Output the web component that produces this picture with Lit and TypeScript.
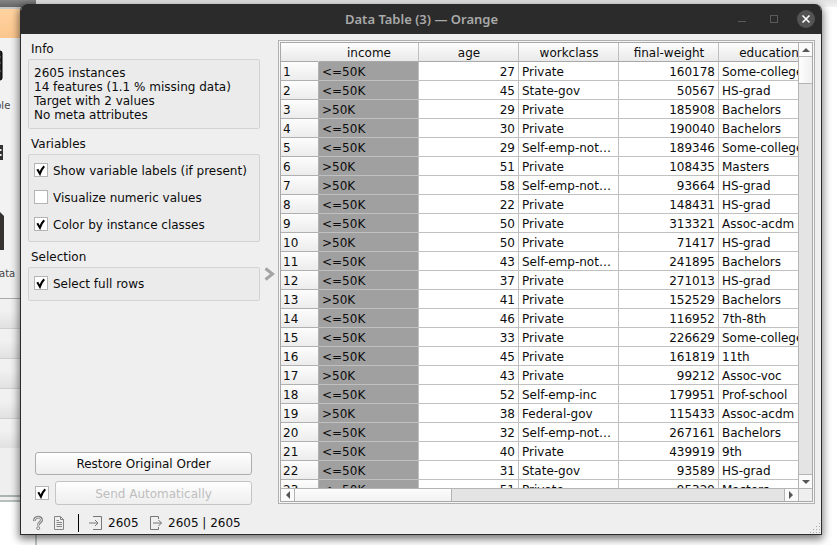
import { LitElement, html, css, svg } from "lit";
import { customElement } from "lit/decorators.js";

type Row = [string, string, string, string, string];

const LE = "<=50K";
const GT = ">50K";
const SELF = "Self-emp-not…";

const ROWS: Row[] = [
  [LE, "27", "Private", "160178", "Some-college"],
  [LE, "45", "State-gov", "50567", "HS-grad"],
  [GT, "29", "Private", "185908", "Bachelors"],
  [LE, "30", "Private", "190040", "Bachelors"],
  [LE, "29", SELF, "189346", "Some-college"],
  [GT, "51", "Private", "108435", "Masters"],
  [GT, "58", SELF, "93664", "HS-grad"],
  [LE, "22", "Private", "148431", "HS-grad"],
  [LE, "50", "Private", "313321", "Assoc-acdm"],
  [GT, "50", "Private", "71417", "HS-grad"],
  [LE, "43", SELF, "241895", "Bachelors"],
  [LE, "37", "Private", "271013", "HS-grad"],
  [GT, "41", "Private", "152529", "Bachelors"],
  [LE, "46", "Private", "116952", "7th-8th"],
  [LE, "33", "Private", "226629", "Some-college"],
  [LE, "45", "Private", "161819", "11th"],
  [GT, "43", "Private", "99212", "Assoc-voc"],
  [LE, "52", "Self-emp-inc", "179951", "Prof-school"],
  [GT, "38", "Federal-gov", "115433", "Assoc-acdm"],
  [LE, "32", SELF, "267161", "Bachelors"],
  [LE, "40", "Private", "439919", "9th"],
  [LE, "31", "State-gov", "93589", "HS-grad"],
  [LE, "51", "Private", "95329", "Masters"],
];

const COLUMNS = ["income", "age", "workclass", "final-weight", "education"];

/** Strip of the canvas window that shows behind the dialog. */
@customElement("canvas-backdrop")
export class CanvasBackdrop extends LitElement {
  static styles = css`
    :host { display: flex; flex-direction: column; width: 837px; height: 545px; overflow: hidden; background: #fff;
      font: 10px/12px "DejaVu Sans", sans-serif; color: #444; }
    .top { display: flex; height: 7px; background: linear-gradient(#e2e2e2, #f4f4f4); }
    .bar { width: 36px; background: linear-gradient(#858585, #666); }
    .edge { width: 36px; height: 2px; background: #c8c8c8; }
    .tab { width: 36px; height: 29px; background: linear-gradient(#ffd3a0, #fcc68d); }
    .tools { position: relative; width: 36px; height: 260px; background: #f2f2f2; }
    .tools svg { position: absolute; left: 0; top: 0; }
    .cap { position: absolute; left: 0; white-space: nowrap; }
    .ple { top: 62px; left: -5px; }
    .ata { top: 230px; left: -1px; }
    .band { width: 36px; height: 30px; box-sizing: border-box; border-top: 1px solid #cfcfcf; background: linear-gradient(#f1f1f1 40%, #e1e1e1); }
    .first { border-top-color: #aaa; }
    .rest { width: 36px; height: 47px; background: #efefef; border-bottom: 2px solid #acb4b1; }
    .gap { width: 36px; height: 3px; background: #f0f0f0; border-bottom: 2px solid #b7bfbc; }
    .foot { width: 35px; flex: 1; border-right: 2px solid #c0c8c5; background: #fff; }
  `;
  render() {
    return html`
      <div class="top"><div class="bar"></div></div>
      <div class="edge"></div>
      <div class="tab"></div>
      <div class="tools">
        <svg width="36" height="260">
          <path d="M-8 13H0Q2 13 2 15V40Q2 42 0 42H-8" fill="#222" stroke="#000"></path>
          <path d="M0 19H1M0 25H1M0 33H1" stroke="#777"></path>
          <path d="M0 107H3V122H0Z" fill="#333"></path>
          <path d="M0 111H1.500V113H0M0 116H1.500V118H0" fill="#eee"></path>
          <path d="M0 174L4 178V212H0Z" fill="#353331"></path>
        </svg>
        <span class="cap ple">ble</span>
        <span class="cap ata">ata</span>
      </div>
      <div class="band first"></div>
      <div class="band"></div><div class="band"></div><div class="band"></div><div class="band"></div>
      <div class="rest"></div>
      <div class="gap"></div>
      <div class="foot"></div>
    `;
  }
}

@customElement("check-box")
export class CheckBox extends LitElement {
  static properties = { checked: { type: Boolean } };
  declare checked: boolean;
  static styles = css`
    :host { display: flex; align-items: center; gap: 5px; height: 14px; white-space: nowrap; }
    .box { width: 14px; height: 14px; box-sizing: border-box; border: 1px solid #b4b4b4; background: #fff; flex: none; display: flex; }
    .text { padding-top: 2px; }
  `;
  render() {
    return html`<span class="box">${this.checked
      ? html`<svg width="12" height="12"><path d="M2.300 5.300L4.900 9.700C6 6.500 7.200 4.200 9.200 2.200" fill="none" stroke="#000" stroke-width="2.100"></path></svg>`
      : ""}</span><span class="text"><slot></slot></span>`;
  }
}

@customElement("data-grid")
export class DataGrid extends LitElement {
  static styles = css`
    :host { display: block; box-sizing: border-box; width: 537px; height: 464px; border: 1px solid #b0b0b0; padding: 1px; background: #f6f6f6; }
    .inner { box-sizing: border-box; width: 533px; height: 460px; border: 1px solid #a8a8a8; display: grid;
      grid-template-columns: 517px 14px; grid-template-rows: 445px 13px; background: #efefef; }
    .view { overflow: hidden; background: #fff; }
    .row { display: grid; grid-template-columns: 38px repeat(5, 100px); height: 19px; line-height: 20px; }
    .row > * { box-sizing: border-box; height: 19px; border-right: 1px solid #c0c0c0; border-bottom: 1px solid #c0c0c0; padding: 0 3px; white-space: nowrap; overflow: hidden; }
    .row > .num { text-align: right; }
    .row > .cls { background: #a0a0a0; }
    .row > .idx { padding: 0 2px; background: linear-gradient(#fdfdfd, #ececec); border-color: #b0b0b0; }
    .head > * { text-align: center; background: linear-gradient(#fdfdfd, #e9e9e9); border-bottom-color: #a8a8a8; line-height: 21px; padding: 0 2px 0 3px; }
    .head > .corner { border-right-color: transparent; }
    .v { display: flex; flex-direction: column; border-left: 1px solid #b4b4b4; background: #e4e4e4; }
    .h { display: flex; border-top: 1px solid #b4b4b4; background: #e4e4e4; }
    .btn { display: flex; align-items: center; justify-content: center; background: #fafafa; box-sizing: border-box; flex: none; }
    .v .btn { height: 14px; }
    .h .btn { width: 14px; }
    .up { border-bottom: 1px solid #b4b4b4; }
    .down { border-top: 1px solid #b4b4b4; }
    .left { border-right: 1px solid #b4b4b4; }
    .right { border-left: 1px solid #b4b4b4; }
    .right svg { margin-right: 2px; }
    .space { flex: 1; }
    .vt { height: 27px; box-sizing: border-box; border-bottom: 1px solid #b4b4b4; background: linear-gradient(90deg, #fdfdfd, #f0f0f0); }
    .ht { width: 157px; box-sizing: border-box; border-right: 1px solid #b4b4b4; background: linear-gradient(#fdfdfd, #f1f1f1); }
    .end { border-left: 1px solid #b4b4b4; border-top: 1px solid #b4b4b4; background: #efefef; }
  `;
  arrow(d: string) {
    return html`<svg width="8" height="8"><path d=${d} fill="#555"></path></svg>`;
  }
  render() {
    return html`
      <div class="inner">
        <div class="view">
          <div class="row head"><span class="corner"></span>${COLUMNS.map((c) => html`<span>${c}</span>`)}</div>
          ${ROWS.map((r, i) => html`<div class="row">
            <span class="idx">${i + 1}</span><span class="cls">${r[0]}</span><span class="num">${r[1]}</span><span>${r[2]}</span><span class="num">${r[3]}</span><span>${r[4]}</span>
          </div>`)}
        </div>
        <div class="v">
          <div class="btn up">${this.arrow("M0 6L4 2L8 6Z")}</div>
          <div class="vt"></div><div class="space"></div>
          <div class="btn down">${this.arrow("M0 2H8L4 6Z")}</div>
        </div>
        <div class="h">
          <div class="btn left">${this.arrow("M6 0V8L2 4Z")}</div>
          <div class="ht"></div><div class="space"></div>
          <div class="btn right">${this.arrow("M2 0V8L6 4Z")}</div>
        </div>
        <div class="end"></div>
      </div>`;
  }
}

@customElement("app-root")
export class AppRoot extends LitElement {
  static styles = css`
    :host { display: block; position: relative; width: 837px; height: 545px; overflow: hidden; font: 12px/14px "DejaVu Sans", sans-serif; color: #0c0c0c; }
    .window { position: absolute; left: 20px; top: 4px; width: 802px; height: 531px; box-sizing: border-box; display: flex; flex-direction: column;
      border: 1px solid #2b2b2b; border-top: 0; border-radius: 7px 7px 0 0; background: #efefef; box-shadow: 0 3px 9px 1px rgba(0,0,0,.55); overflow: hidden; }
    .title { display: grid; grid-template-columns: 1fr auto; height: 30px; flex: none; background: #2b2b2b; color: #a9a9a9; align-items: center;
      font: 600 13px/30px "Noto Sans", sans-serif; }
    .caption { padding-left: 324px; white-space: nowrap; }
    .controls { display: block; }
    .body { flex: 1; display: grid; grid-template-columns: 239px 18px 537px; padding: 6px 0 0 0; min-height: 0; height: 466px; }
    .side { display: flex; flex-direction: column; padding-left: 7px; height: 465px; }
    .label { padding-left: 3px; height: 14px; }
    .group { box-sizing: border-box; width: 232px; border: 1px solid #d3d3d3; border-radius: 2px; background: #ebebeb; padding: 0 5px; }
    .lines { height: 70px; padding-top: 6px; margin: 3px 0 8px; white-space: nowrap; }
    .info { padding-top: 2px; }
    .vars { height: 88px; display: flex; flex-direction: column; gap: 13px; padding-top: 8px; margin: 3px 0 8px; }
    .sel { height: 34px; padding-top: 8px; margin-top: 3px; }
    .spring { flex: 1; }
    .push { box-sizing: border-box; border: 1px solid #adadad; border-radius: 3px; background: linear-gradient(#fefefe, #eee); text-align: center; }
    .restore { width: 217px; height: 23px; line-height: 23px; margin: 0 0 6px 7px; }
    .auto { display: flex; align-items: center; gap: 6px; padding-left: 7px; }
    .auto check-box { gap: 0; }
    .send { width: 197px; height: 24px; line-height: 24px; color: #bebebe; border-color: #c4c4c4; }
    .split { display: flex; align-items: center; justify-content: center; padding-left: 1px; }
    .status { height: 27px; display: flex; align-items: center; flex: none; position: relative; }
    .status svg { flex: none; }
    .grip { position: absolute; right: 1px; bottom: 1px; }
    .n1 { margin-left: 5px; width: 42px; padding-top: 5px; }
    .n2 { margin-left: 6px; white-space: pre; padding-top: 4px; }
  `;
  render() {
    const dots = [0, 1, 2, 3].flatMap((r) =>
      Array.from({ length: r + 1 }, (_, c) => svg`<rect x=${9 - c * 3} y=${r * 3} width="1" height="1" fill="#aaa"></rect>`));
    return html`
      <canvas-backdrop></canvas-backdrop>
      <div class="window">
        <div class="title">
          <span class="caption">Data Table (3) — Orange</span>
          <svg class="controls" width="90" height="30">
            <path d="M7 17.500H15" stroke="#5a5a5a"></path>
            <rect x="39.500" y="11.500" width="7" height="7" fill="none" stroke="#5a5a5a"></rect>
            <circle cx="75" cy="15" r="9" fill="#545454"></circle>
            <path d="M71.500 11.500L78.500 18.500M78.500 11.500L71.500 18.500" stroke="#fff" stroke-width="1.600"></path>
          </svg>
        </div>
        <div class="body">
          <div class="side">
            <div class="label info">Info</div>
            <div class="group lines">2605 instances<br>14 features (1.1 % missing data)<br>Target with 2 values<br>No meta attributes</div>
            <div class="label">Variables</div>
            <div class="group vars">
              <check-box checked>Show variable labels (if present)</check-box>
              <check-box>Visualize numeric values</check-box>
              <check-box checked>Color by instance classes</check-box>
            </div>
            <div class="label">Selection</div>
            <div class="group sel"><check-box checked>Select full rows</check-box></div>
            <div class="spring"></div>
            <div class="push restore">Restore Original Order</div>
            <div class="auto"><check-box checked></check-box><div class="push send">Send Automatically</div></div>
          </div>
          <div class="split"><svg width="11" height="14"><path d="M1.500 1.500L8.500 7L1.500 12.500" fill="none" stroke="#a3a3a3" stroke-width="3"></path></svg></div>
          <data-grid></data-grid>
        </div>
        <div class="status">
          <svg width="82" height="27" fill="none">
            <path d="M13.500 14C13 9 21 9 20.500 13.200C20.200 15.500 17.200 15.500 17.200 18.500" stroke="#858585" stroke-width="3"></path>
            <path d="M13.500 13.500C13.500 9.700 20.500 9.700 20.300 13.200C20.200 15.500 17.200 15.500 17.200 18" stroke="#eee"></path>
            <circle cx="17.200" cy="21.200" r="1.500" stroke="#858585" fill="#eee"></circle>
            <path d="M33.500 9.500H39.500L42.500 12.500V22.500H33.500ZM39.500 9.500V12.500H42.500M35.500 13.500H38M35.500 15.500H41M35.500 17.500H41M35.500 19.500H41" stroke="#858585"></path>
            <path d="M57.500 7V25" stroke="#000"></path>
            <path d="M72 9.500H80.500V22.500H72M68 16H77M74 13L77 16L74 19" stroke="#777"></path>
          </svg>
          <span class="n1">2605</span>
          <svg width="12" height="27" fill="none"><path d="M8.500 12V9.500H0.500V22.500H8.500V20M3 16H11.500M8.500 13L11.500 16L8.500 19" stroke="#777"></path></svg>
          <span class="n2">2605 | 2605</span>
          <svg class="grip" width="10" height="10">${dots}</svg>
        </div>
      </div>`;
  }
}
